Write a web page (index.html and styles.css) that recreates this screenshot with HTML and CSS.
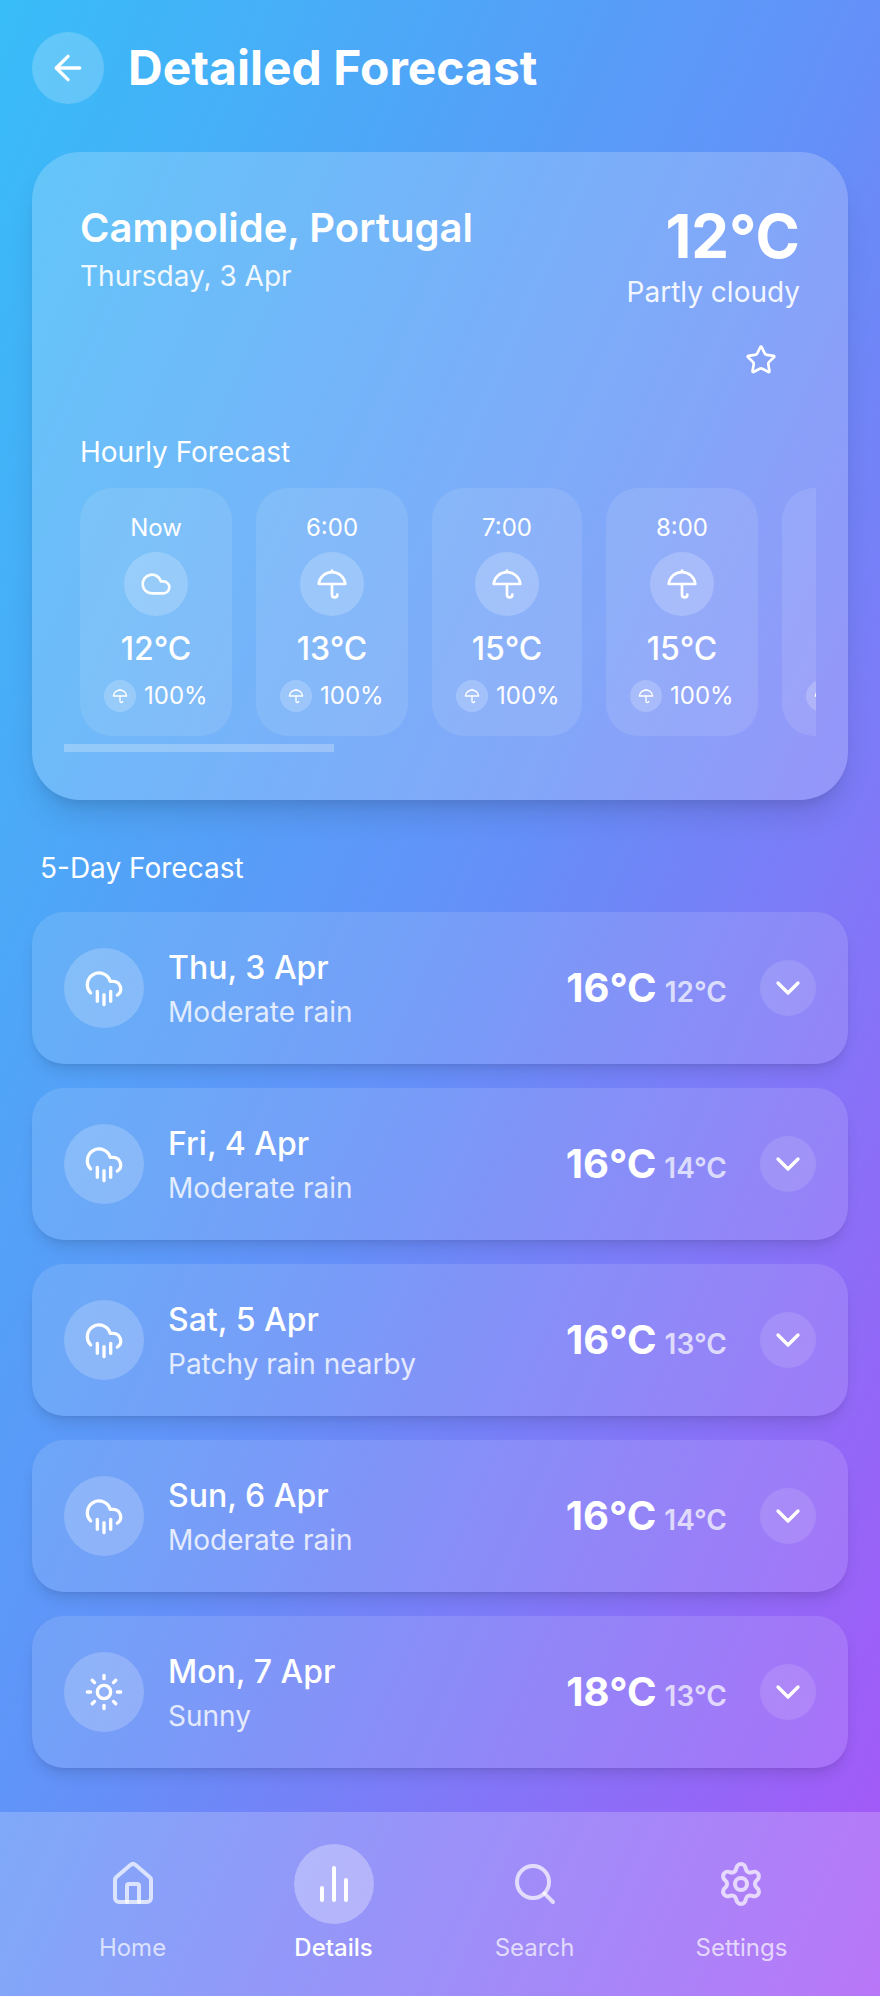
FILE: index.html
```html
<!DOCTYPE html>
<html lang="en">
<head>
  <meta charset="UTF-8">
  <title>Detailed Forecast</title>
  <link rel="stylesheet" href="styles.css">
</head>
<body>
  <svg class="sprite" xmlns="http://www.w3.org/2000/svg">
    <symbol id="i-back" viewBox="0 0 24 24"><path d="m12 19-7-7 7-7"/><path d="M19 12H5"/></symbol>
    <symbol id="i-star" viewBox="0 0 24 24"><path d="M11.525 2.295a.53.53 0 0 1 .95 0l2.31 4.679a2.123 2.123 0 0 0 1.595 1.16l5.166.756a.53.53 0 0 1 .294.904l-3.736 3.638a2.123 2.123 0 0 0-.611 1.878l.882 5.14a.53.53 0 0 1-.771.56l-4.618-2.428a2.122 2.122 0 0 0-1.973 0L6.396 21.01a.53.53 0 0 1-.77-.56l.881-5.139a2.122 2.122 0 0 0-.611-1.879L2.16 9.795a.53.53 0 0 1 .294-.906l5.165-.755a2.122 2.122 0 0 0 1.597-1.16z"/></symbol>
    <symbol id="i-cloud" viewBox="0 0 24 24"><path d="M17.5 19H9a7 7 0 1 1 6.71-9h1.79a4.5 4.5 0 1 1 0 9Z"/></symbol>
    <symbol id="i-umbrella" viewBox="0 0 24 24"><path d="M22 12a10.06 10.06 1 0 0-20 0Z"/><path d="M12 12v8a2 2 0 0 0 4 0"/><path d="M12 2v1"/></symbol>
    <symbol id="i-rain" viewBox="0 0 24 24"><path d="M4 14.899A7 7 0 1 1 15.71 8h1.79a4.5 4.5 0 0 1 2.5 8.242"/><path d="M16 14v6"/><path d="M8 14v6"/><path d="M12 16v6"/></symbol>
    <symbol id="i-sun" viewBox="0 0 24 24"><circle cx="12" cy="12" r="4"/><path d="M12 2v2"/><path d="M12 20v2"/><path d="m4.93 4.93 1.41 1.41"/><path d="m17.66 17.66 1.41 1.41"/><path d="M2 12h2"/><path d="M20 12h2"/><path d="m6.34 17.66-1.41 1.41"/><path d="m19.07 4.93-1.41 1.41"/></symbol>
    <symbol id="i-chevron" viewBox="0 0 24 24"><path d="m6 9 6 6 6-6"/></symbol>
    <symbol id="i-home" viewBox="0 0 24 24"><path d="M15 21v-8a1 1 0 0 0-1-1h-4a1 1 0 0 0-1 1v8"/><path d="M3 10a2 2 0 0 1 .709-1.528l7-5.999a2 2 0 0 1 2.582 0l7 5.999A2 2 0 0 1 21 10v9a2 2 0 0 1-2 2H5a2 2 0 0 1-2-2z"/></symbol>
    <symbol id="i-chart" viewBox="0 0 24 24"><path d="M18 20V10"/><path d="M12 20V4"/><path d="M6 20v-6"/></symbol>
    <symbol id="i-search" viewBox="0 0 24 24"><circle cx="11" cy="11" r="8"/><path d="m21 21-4.3-4.3"/></symbol>
    <symbol id="i-settings" viewBox="0 0 24 24"><path d="M9.671 4.136a2.34 2.34 0 0 1 4.659 0 2.34 2.34 0 0 0 3.319 1.915 2.34 2.34 0 0 1 2.33 4.033 2.34 2.34 0 0 0 0 3.831 2.34 2.34 0 0 1-2.33 4.033 2.34 2.34 0 0 0-3.319 1.915 2.34 2.34 0 0 1-4.659 0 2.34 2.34 0 0 0-3.32-1.915 2.34 2.34 0 0 1-2.33-4.033 2.34 2.34 0 0 0 0-3.831A2.34 2.34 0 0 1 6.35 6.051a2.34 2.34 0 0 0 3.32-1.915"/><circle cx="12" cy="12" r="3"/></symbol>
  </svg>

  <header class="page-head">
    <button class="back-btn"><svg class="icon icon-40"><use href="#i-back"/></svg></button>
    <h1>Detailed Forecast</h1>
  </header>

  <section class="now-card">
    <div class="now-top">
      <div>
        <h2 class="place">Campolide, Portugal</h2>
        <p class="date">Thursday, 3 Apr</p>
      </div>
      <div class="now-right">
        <div class="now-temp">12°C</div>
        <div class="now-cond">Partly cloudy</div>
        <button class="fav-btn"><svg class="icon icon-32"><use href="#i-star"/></svg></button>
      </div>
    </div>

    <h3 class="hourly-title">Hourly Forecast</h3>
    <div class="hourly-row">
      <div class="hour">
        <div class="hour-time">Now</div>
        <div class="hour-icon"><svg class="icon icon-32"><use href="#i-cloud"/></svg></div>
        <div class="hour-temp">12°C</div>
        <div class="hour-rain"><span class="rain-dot"><svg class="icon icon-16"><use href="#i-umbrella"/></svg></span>100%</div>
      </div>
      <div class="hour">
        <div class="hour-time">6:00</div>
        <div class="hour-icon"><svg class="icon icon-32"><use href="#i-umbrella"/></svg></div>
        <div class="hour-temp">13°C</div>
        <div class="hour-rain"><span class="rain-dot"><svg class="icon icon-16"><use href="#i-umbrella"/></svg></span>100%</div>
      </div>
      <div class="hour hour-narrow">
        <div class="hour-time">7:00</div>
        <div class="hour-icon"><svg class="icon icon-32"><use href="#i-umbrella"/></svg></div>
        <div class="hour-temp">15°C</div>
        <div class="hour-rain"><span class="rain-dot"><svg class="icon icon-16"><use href="#i-umbrella"/></svg></span>100%</div>
      </div>
      <div class="hour">
        <div class="hour-time">8:00</div>
        <div class="hour-icon"><svg class="icon icon-32"><use href="#i-umbrella"/></svg></div>
        <div class="hour-temp">15°C</div>
        <div class="hour-rain"><span class="rain-dot"><svg class="icon icon-16"><use href="#i-umbrella"/></svg></span>100%</div>
      </div>
      <div class="hour">
        <div class="hour-time"></div>
        <div class="hour-icon"></div>
        <div class="hour-temp"></div>
        <div class="hour-rain"><span class="rain-dot"><svg class="icon icon-16"><use href="#i-umbrella"/></svg></span></div>
      </div>
    </div>
    <div class="scroll-thumb"></div>
  </section>

  <h3 class="days-title">5-Day Forecast</h3>
  <section class="days">
    <article class="day">
      <div class="day-icon"><svg class="icon icon-40"><use href="#i-rain"/></svg></div>
      <div class="day-text">
        <div class="day-name">Thu, 3 Apr</div>
        <div class="day-cond">Moderate rain</div>
      </div>
      <div class="day-temps"><span class="temp-max">16°C</span><span class="temp-min">12°C</span></div>
      <button class="day-more"><svg class="icon icon-40"><use href="#i-chevron"/></svg></button>
    </article>
    <article class="day">
      <div class="day-icon"><svg class="icon icon-40"><use href="#i-rain"/></svg></div>
      <div class="day-text">
        <div class="day-name">Fri, 4 Apr</div>
        <div class="day-cond">Moderate rain</div>
      </div>
      <div class="day-temps"><span class="temp-max">16°C</span><span class="temp-min">14°C</span></div>
      <button class="day-more"><svg class="icon icon-40"><use href="#i-chevron"/></svg></button>
    </article>
    <article class="day">
      <div class="day-icon"><svg class="icon icon-40"><use href="#i-rain"/></svg></div>
      <div class="day-text">
        <div class="day-name">Sat, 5 Apr</div>
        <div class="day-cond">Patchy rain nearby</div>
      </div>
      <div class="day-temps"><span class="temp-max">16°C</span><span class="temp-min">13°C</span></div>
      <button class="day-more"><svg class="icon icon-40"><use href="#i-chevron"/></svg></button>
    </article>
    <article class="day">
      <div class="day-icon"><svg class="icon icon-40"><use href="#i-rain"/></svg></div>
      <div class="day-text">
        <div class="day-name">Sun, 6 Apr</div>
        <div class="day-cond">Moderate rain</div>
      </div>
      <div class="day-temps"><span class="temp-max">16°C</span><span class="temp-min">14°C</span></div>
      <button class="day-more"><svg class="icon icon-40"><use href="#i-chevron"/></svg></button>
    </article>
    <article class="day">
      <div class="day-icon"><svg class="icon icon-40"><use href="#i-sun"/></svg></div>
      <div class="day-text">
        <div class="day-name">Mon, 7 Apr</div>
        <div class="day-cond">Sunny</div>
      </div>
      <div class="day-temps"><span class="temp-max">18°C</span><span class="temp-min">13°C</span></div>
      <button class="day-more"><svg class="icon icon-40"><use href="#i-chevron"/></svg></button>
    </article>
  </section>

  <nav class="tabs">
    <a class="tab"><span class="tab-icon"><svg class="icon icon-48"><use href="#i-home"/></svg></span>Home</a>
    <a class="tab active"><span class="tab-icon"><svg class="icon icon-48"><use href="#i-chart"/></svg></span>Details</a>
    <a class="tab"><span class="tab-icon"><svg class="icon icon-48"><use href="#i-search"/></svg></span>Search</a>
    <a class="tab"><span class="tab-icon"><svg class="icon icon-48"><use href="#i-settings"/></svg></span>Settings</a>
  </nav>
</body>
</html>
```

FILE: styles.css
```css
* {
  box-sizing: border-box;
}

body {
  margin: 0;
  width: 880px;
  height: 1996px;
  overflow: hidden;
  color: #fff;
  font-family: Inter, "Liberation Sans", sans-serif;
  background: linear-gradient(to bottom right, #38bdf8 0%, #6490f8 50%, #a855f7 100%);
  display: flex;
  flex-direction: column;
}

h1, h2, h3, p {
  margin: 0;
}

button {
  border: 0;
  padding: 0;
  color: inherit;
  background: none;
}

.sprite {
  display: none;
}

.icon {
  display: block;
  fill: none;
  stroke: #fff;
  stroke-width: 2;
  stroke-linecap: round;
  stroke-linejoin: round;
}

.icon-16 { width: 16px; height: 16px; }
.icon-32 { width: 32px; height: 32px; }
.icon-40 { width: 40px; height: 40px; }
.icon-48 { width: 48px; height: 48px; }

/* header */
.page-head {
  display: flex;
  align-items: center;
  gap: 24px;
  padding: 32px 32px 0;
  height: 104px;
  flex-shrink: 0;
}

.page-head h1 {
  font-size: 48px;
  line-height: 56px;
  font-weight: 700;
}

.back-btn {
  width: 72px;
  height: 72px;
  border-radius: 50%;
  background: rgba(255, 255, 255, 0.2);
  display: flex;
  align-items: center;
  justify-content: center;
}

/* current weather card */
.now-card {
  margin: 48px 32px 0;
  height: 648px;
  padding: 48px 48px 0;
  border-radius: 48px;
  background: rgba(255, 255, 255, 0.2);
  box-shadow: 0 20px 30px -6px rgba(0, 0, 0, 0.12), 0 8px 12px -6px rgba(0, 0, 0, 0.1);
  flex-shrink: 0;
}

.now-top {
  display: flex;
  justify-content: space-between;
  height: 232px;
}

.place {
  font-size: 40px;
  line-height: 56px;
  font-weight: 600;
}

.date {
  font-size: 28px;
  line-height: 40px;
  opacity: 0.9;
}

.now-right {
  display: flex;
  flex-direction: column;
  align-items: flex-end;
}

.now-temp {
  font-size: 60px;
  line-height: 72px;
  font-weight: 700;
}

.now-cond {
  font-size: 28px;
  line-height: 40px;
  opacity: 0.9;
}

.fav-btn {
  margin: 32px 23px 0 0;
}

.hourly-title {
  font-size: 28px;
  line-height: 40px;
  font-weight: 400;
  margin-bottom: 16px;
}

.hourly-row {
  display: flex;
  gap: 24px;
  width: 736px;
  overflow: hidden;
}

.hour {
  flex: 0 0 152px;
  height: 248px;
  padding-top: 24px;
  border-radius: 32px;
  background: rgba(255, 255, 255, 0.1);
  display: flex;
  flex-direction: column;
  align-items: center;
}

.hour-narrow {
  flex-basis: 150px;
}

.hour-time {
  height: 32px;
  font-size: 24px;
  line-height: 32px;
}

.hour-icon {
  width: 64px;
  height: 64px;
  margin-top: 8px;
  border-radius: 50%;
  background: rgba(255, 255, 255, 0.2);
  display: flex;
  align-items: center;
  justify-content: center;
}

.hour-temp {
  height: 48px;
  margin-top: 9px;
  font-size: 32px;
  line-height: 48px;
  font-weight: 500;
}

.hour-rain {
  align-self: stretch;
  margin-top: 7px;
  padding-left: 24px;
  display: flex;
  align-items: center;
  gap: 8px;
  font-size: 24px;
  line-height: 32px;
}

.rain-dot {
  width: 32px;
  height: 32px;
  flex-shrink: 0;
  border-radius: 50%;
  background: rgba(255, 255, 255, 0.2);
  display: flex;
  align-items: center;
  justify-content: center;
}

.scroll-thumb {
  width: 270px;
  height: 8px;
  margin: 8px 0 0 -16px;
  background: rgba(255, 255, 255, 0.25);
}

/* 5-day list */
.days-title {
  margin: 48px 40px 24px;
  font-size: 28px;
  line-height: 40px;
  font-weight: 400;
}

.days {
  margin: 0 32px;
  display: flex;
  flex-direction: column;
  gap: 24px;
}

.day {
  height: 152px;
  padding: 0 32px;
  border-radius: 32px;
  background: rgba(255, 255, 255, 0.12);
  box-shadow: 0 10px 15px -3px rgba(0, 0, 0, 0.1), 0 4px 6px -4px rgba(0, 0, 0, 0.1);
  display: flex;
  align-items: center;
}

.day-icon {
  width: 80px;
  height: 80px;
  border-radius: 50%;
  background: rgba(255, 255, 255, 0.2);
  display: flex;
  align-items: center;
  justify-content: center;
}

.day-text {
  margin-left: 24px;
  flex: 1;
}

.day-name {
  font-size: 32px;
  line-height: 48px;
  font-weight: 500;
}

.day-cond {
  font-size: 28px;
  line-height: 40px;
  opacity: 0.8;
}

.day-temps {
  display: flex;
  align-items: baseline;
  gap: 8px;
  margin: 0 33px 2px 0;
}

.temp-max {
  font-size: 40px;
  font-weight: 700;
}

.temp-min {
  font-size: 28px;
  font-weight: 600;
  opacity: 0.7;
}

.day-more {
  width: 56px;
  height: 56px;
  border-radius: 50%;
  background: rgba(255, 255, 255, 0.12);
  display: flex;
  align-items: center;
  justify-content: center;
}

/* bottom tabs */
.tabs {
  margin-top: auto;
  height: 184px;
  padding: 32px 32px 0;
  background: rgba(255, 255, 255, 0.2);
  display: flex;
  justify-content: space-around;
  flex-shrink: 0;
}

.tab {
  min-width: 80px;
  display: flex;
  flex-direction: column;
  align-items: center;
  gap: 8px;
  font-size: 24px;
  line-height: 32px;
  color: rgba(255, 255, 255, 0.7);
}

.tab .icon {
  stroke: rgba(255, 255, 255, 0.7);
}

.tab-icon {
  width: 80px;
  height: 80px;
  border-radius: 50%;
  display: flex;
  align-items: center;
  justify-content: center;
}

.tab.active {
  color: #fff;
  font-weight: 500;
}

.tab.active .icon {
  stroke: #fff;
}

.tab.active .tab-icon {
  background: rgba(255, 255, 255, 0.3);
}
```
